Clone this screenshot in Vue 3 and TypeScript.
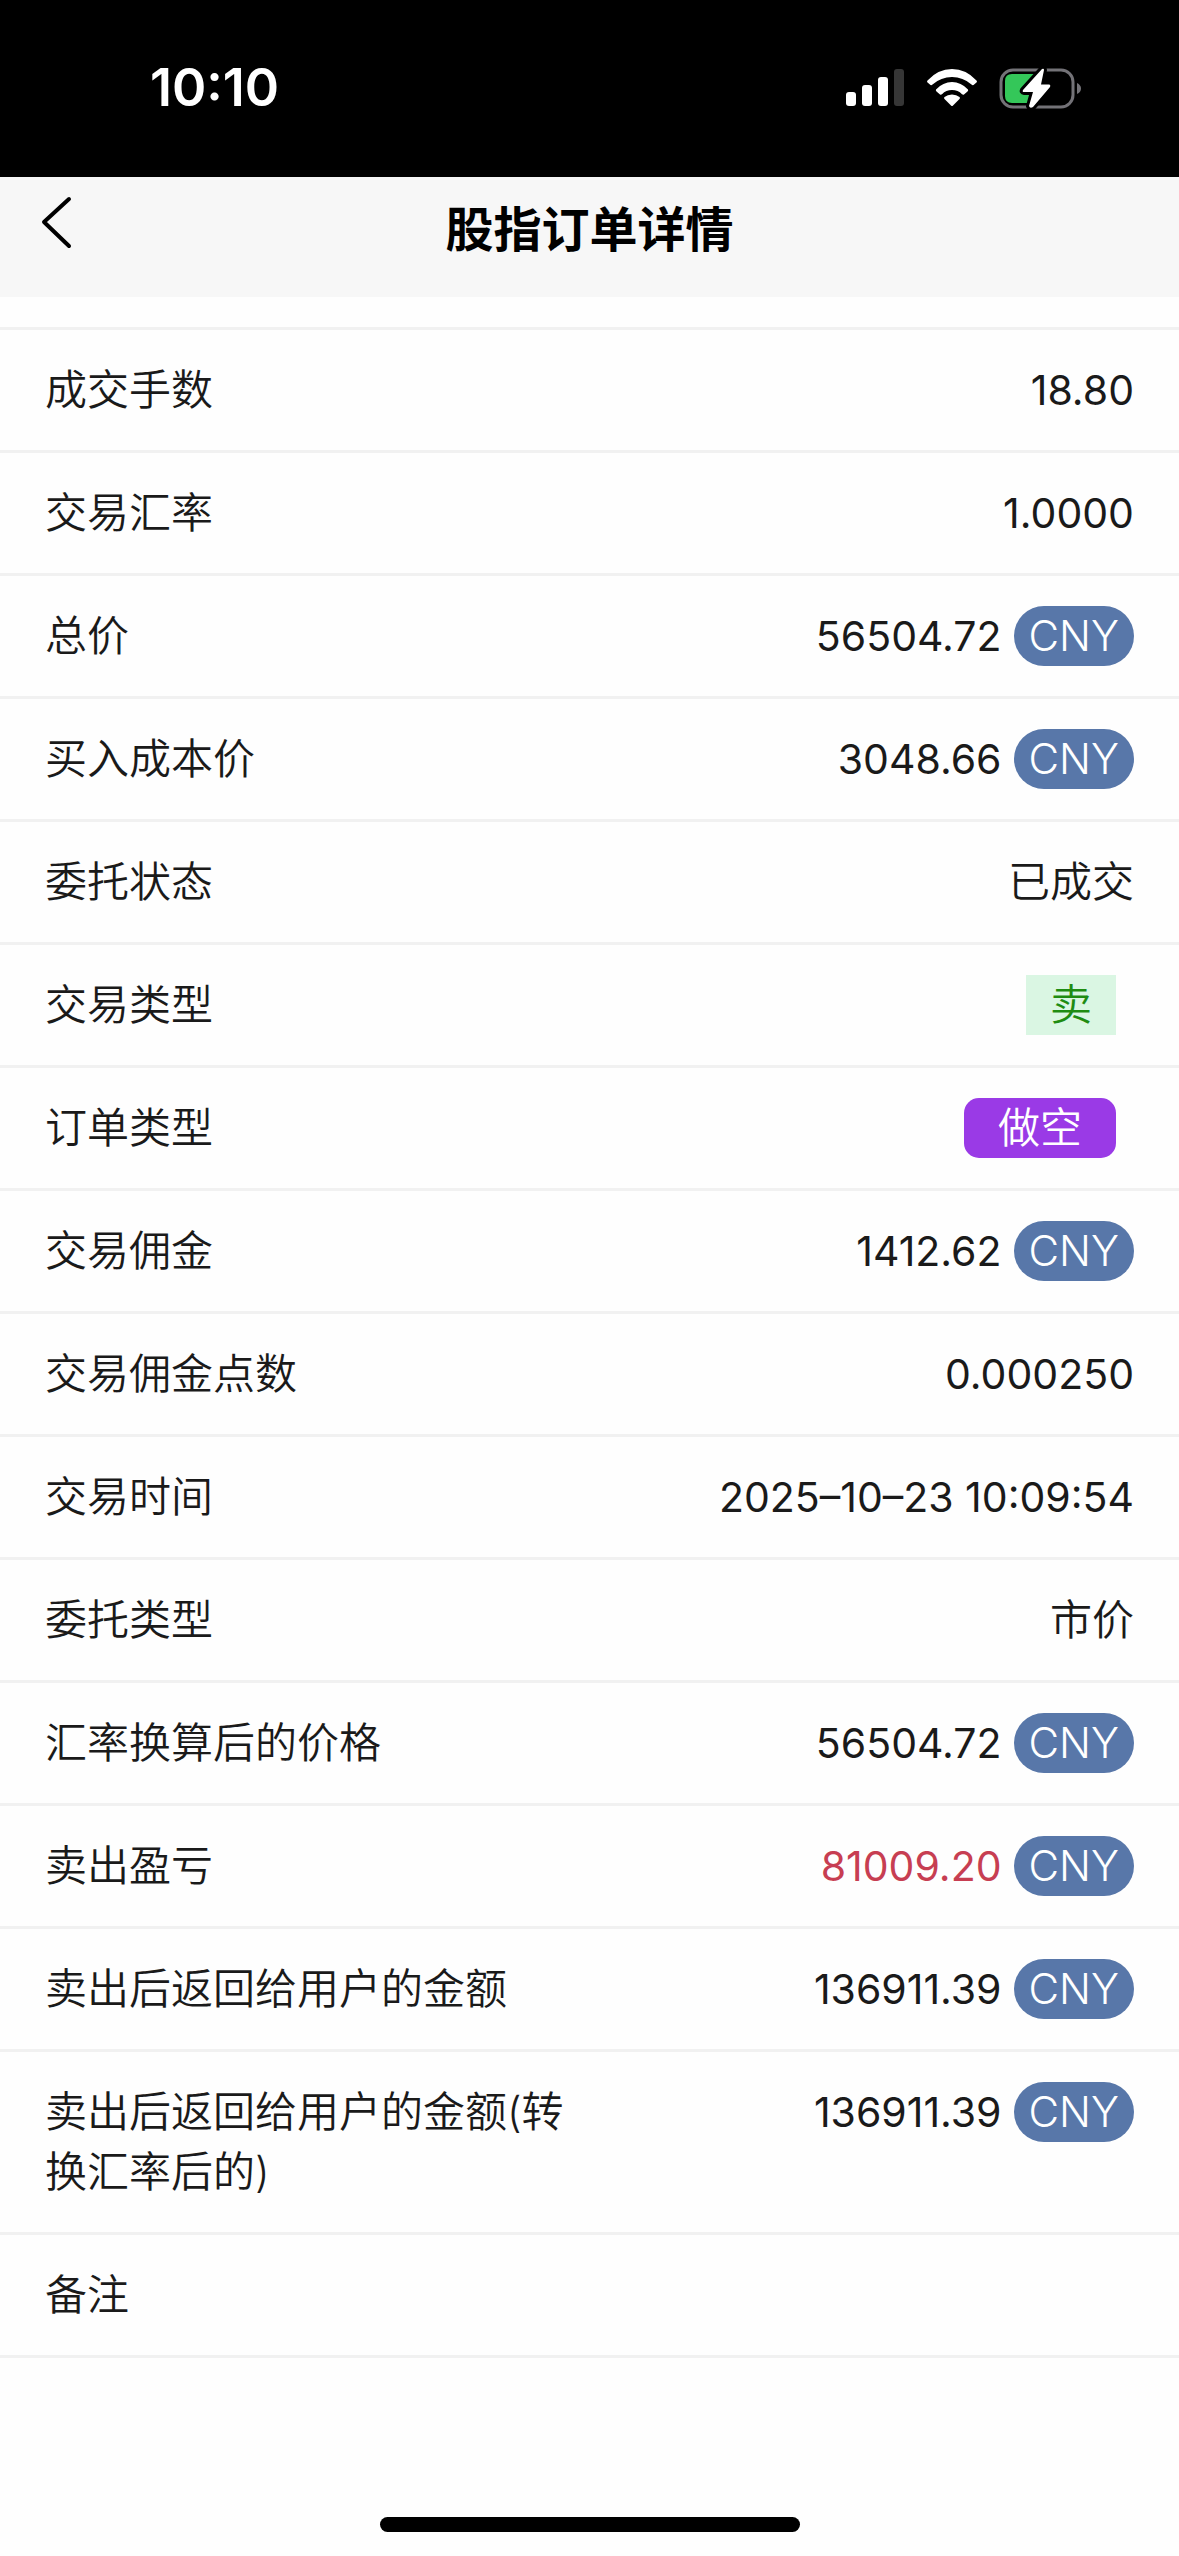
<script setup lang="ts">
type Kind = 'number' | 'sell' | 'short' | 'loss'

interface DetailRow {
  label: string
  value: string
  kind?: Kind
  currency?: string
}

const rows: DetailRow[] = [
  { label: '成交手数', value: '18.80', kind: 'number' },
  { label: '交易汇率', value: '1.0000', kind: 'number' },
  { label: '总价', value: '56504.72', kind: 'number', currency: 'CNY' },
  { label: '买入成本价', value: '3048.66', kind: 'number', currency: 'CNY' },
  { label: '委托状态', value: '已成交' },
  { label: '交易类型', value: '卖', kind: 'sell' },
  { label: '订单类型', value: '做空', kind: 'short' },
  { label: '交易佣金', value: '1412.62', kind: 'number', currency: 'CNY' },
  { label: '交易佣金点数', value: '0.000250', kind: 'number' },
  { label: '交易时间', value: '2025–10–23 10:09:54', kind: 'number' },
  { label: '委托类型', value: '市价' },
  { label: '汇率换算后的价格', value: '56504.72', kind: 'number', currency: 'CNY' },
  { label: '卖出盈亏', value: '81009.20', kind: 'loss', currency: 'CNY' },
  { label: '卖出后返回给用户的金额', value: '136911.39', kind: 'number', currency: 'CNY' },
  { label: '卖出后返回给用户的金额(转换汇率后的)', value: '136911.39', kind: 'number', currency: 'CNY' },
  { label: '备注', value: '' },
]
</script>

<template>
  <div class="screen">
    <div class="status">
      <span class="clock">10:10</span>
      <div class="indicators">
        <svg width="60" height="40" viewBox="0 0 60 40" aria-hidden="true">
          <rect x="1" y="24" width="10" height="14" rx="3" fill="#fff" />
          <rect x="17" y="17" width="10" height="21" rx="3" fill="#fff" />
          <rect x="33" y="9" width="10" height="29" rx="3" fill="#fff" />
          <rect x="49" y="1" width="10" height="37" rx="3" fill="#363636" />
        </svg>
        <svg width="52" height="40" viewBox="0 0 52 40" aria-hidden="true" fill="#fff">
          <path d="M1.500 12.500 Q12 1 26 1 T50.500 12.500 Q51.500 13.500 50.500 14.500 L47.500 17 Q46.500 17.500 45.500 16.500 Q37 9 26 9 T6.500 16.500 Q5.500 17.500 4.500 17 L1.500 14.500 Q0.500 13.500 1.500 12.500 Z" />
          <path d="M10 21.500 Q17 14 26 14 T42 21.500 Q42.500 22.500 41.500 23.500 L38 26.500 Q37 27 36 26.200 Q32 22 26 22 T16 26.200 Q15 27 14 26.500 L10.500 23.500 Q9.500 22.500 10 21.500 Z" />
          <path d="M18.500 29 Q21.500 26.500 26 26.500 T33.500 29 Q34.500 30 33.500 31 L27 37.500 Q26 38.500 25 37.500 L18.500 31 Q17.500 30 18.500 29 Z" />
        </svg>
        <svg width="84" height="44" viewBox="0 0 84 44" aria-hidden="true">
          <rect x="2" y="4" width="72" height="37" rx="12" fill="none" stroke="#737277" stroke-width="3" />
          <path d="M78 17 Q82 19 82 22.500 Q82 26 78 28 Z" fill="#737277" />
          <path d="M13 8 H36 V37 H13 Q6 37 6 30 V15 Q6 8 13 8 Z" fill="#34c759" />
          <path d="M43 3 L24 24 Q23 26 25 26 L34 26 L30 40 Q31 43 34 41 L51 21 Q52 19 50 18.500 L42 18.500 L45 4 Q45 2 43 3 Z" fill="#fff" stroke="#000" stroke-width="6" stroke-linejoin="round" paint-order="stroke" />
        </svg>
      </div>
    </div>

    <header class="navbar">
      <button class="back" type="button" aria-label="返回">
        <svg width="32" height="54" viewBox="0 0 32 54" aria-hidden="true">
          <path d="M28 4 L3 27 L28 51" fill="none" stroke="#000" stroke-width="4" stroke-linecap="round" stroke-linejoin="round" />
        </svg>
      </button>
      <h1 class="title">股指订单详情</h1>
    </header>

    <main class="content">
      <dl class="details">
        <div v-for="row in rows" :key="row.label" class="row">
          <dt class="label">{{ row.label }}</dt>
          <dd class="value">
            <span :class="row.kind">{{ row.value }}</span>
            <span v-if="row.currency" class="currency">{{ row.currency }}</span>
          </dd>
        </div>
      </dl>
    </main>

    <div class="home-indicator"></div>
  </div>
</template>

<style>
body {
  margin: 0;
  background: #fefefe;
}
</style>

<style scoped>
.screen {
  display: flex;
  flex-direction: column;
  min-height: 100vh;
  box-sizing: border-box;
  font-family: Inter, "Noto Sans CJK SC", sans-serif;
  font-size: 42px;
  font-weight: 350;
  line-height: 60px;
  color: #1a1a1a;
  background: #fefefe;
}

.status {
  display: flex;
  align-items: center;
  justify-content: space-between;
  height: 177px;
  padding: 0 96px 1px 150px;
  box-sizing: border-box;
  color: #fff;
  background: #000;
}

.clock {
  font-size: 52px;
  font-weight: 600;
}

.indicators {
  display: flex;
  align-items: center;
  gap: 21px;
}

.navbar {
  display: grid;
  grid-template-columns: 1fr auto 1fr;
  align-items: start;
  height: 120px;
  padding: 18px 41px 0;
  box-sizing: border-box;
  background: #f7f7f7;
}

.back {
  display: flex;
  justify-self: start;
  padding: 0;
  border: 0;
  background: none;
}

.title {
  margin: 0;
  font-size: 48px;
  line-height: 69px;
  font-weight: 700;
  color: #000;
}

.content {
  flex: 1;
  padding-top: 30px;
}

.details {
  margin: 0;
  border-top: 3px solid #f1f1f1;
}

.row {
  display: flex;
  padding: 30px 45px;
  border-bottom: 3px solid #f1f1f1;
}

.label {
  flex: 1;
}

.value {
  display: flex;
  flex: 1;
  align-items: flex-start;
  justify-content: flex-end;
  gap: 12px;
  margin: 0;
}

.number,
.loss {
  font-size: 41px;
  font-weight: 400;
}

.loss {
  color: #c73e52;
}

.currency {
  padding: 0 15px;
  border-radius: 30px;
  font-weight: 300;
  color: #fff;
  background: #5877a9;
}

.sell {
  margin-right: 18px;
  padding: 0 24px;
  color: #1f8c12;
  background: #daf6e3;
}

.short {
  margin-right: 18px;
  padding: 0 34px;
  border-radius: 15px;
  color: #fff;
  background: #9a3ae6;
}

.home-indicator {
  align-self: center;
  width: 420px;
  max-width: 60%;
  height: 15px;
  margin-bottom: 24px;
  border-radius: 8px;
  background: #000;
}
</style>
